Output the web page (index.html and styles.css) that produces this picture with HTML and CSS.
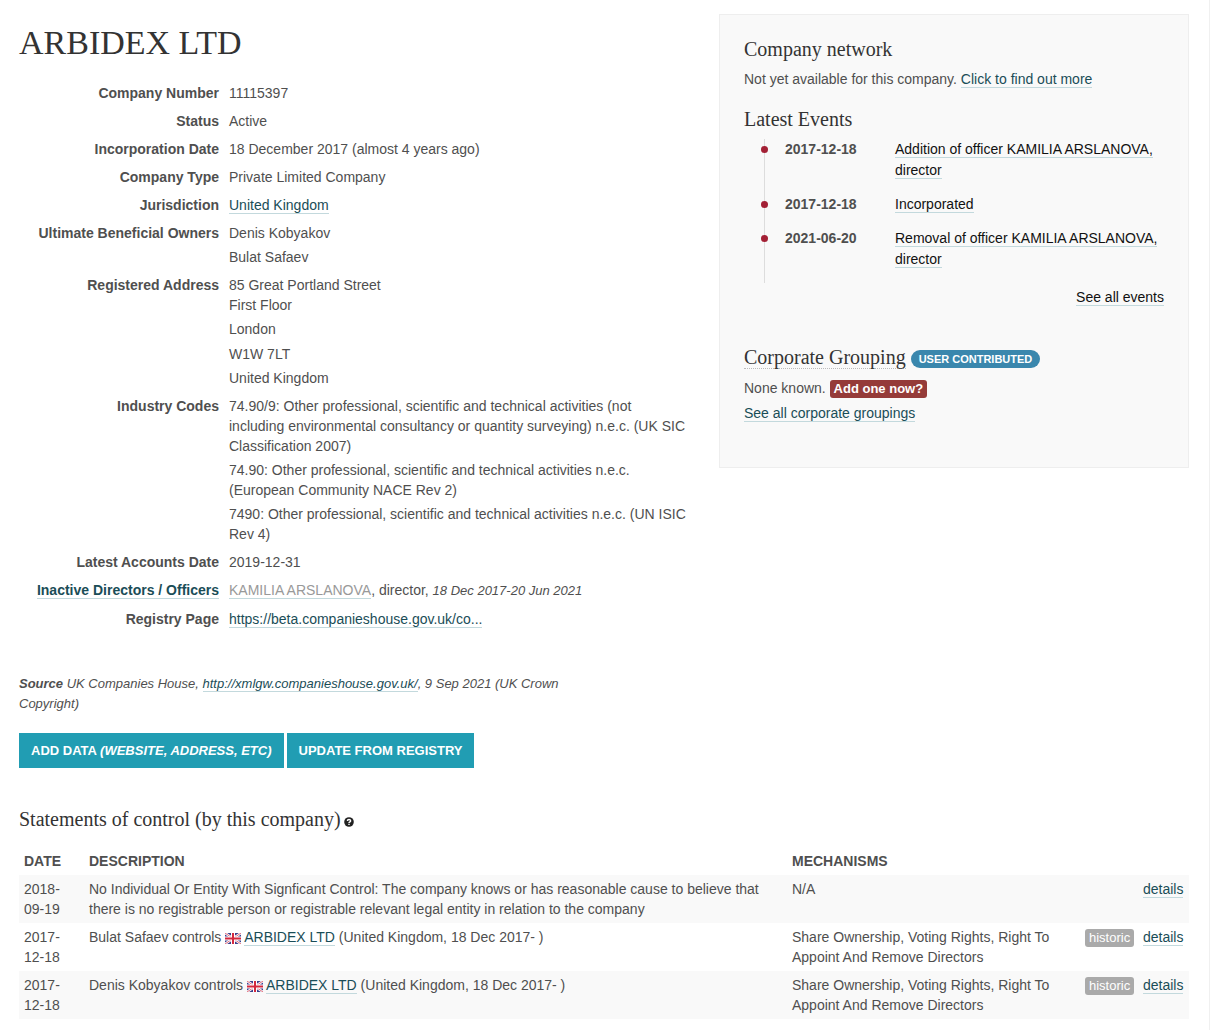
FILE: index.html
```html
<!DOCTYPE html>
<html lang="en">
<head>
<meta charset="utf-8">
<meta name="viewport" content="width=device-width, initial-scale=1">
<title>ARBIDEX LTD</title>
<link rel="stylesheet" href="styles.css">
</head>
<body>
<svg class="sprite" aria-hidden="true">
  <symbol id="flag-gb" viewBox="0 0 16 11">
    <rect width="16" height="11" fill="#3a3f8c"/>
    <path d="M0 0L16 11M16 0L0 11" stroke="#fff" stroke-width="2.4"/>
    <path d="M0 0L16 11M16 0L0 11" stroke="#e0697a" stroke-width="1"/>
    <path d="M8 0V11M0 5.5H16" stroke="#fff" stroke-width="4"/>
    <path d="M8 0V11M0 5.5H16" stroke="#d4283e" stroke-width="2"/>
  </symbol>
</svg>
<main class="page">
  <div class="overview">
    <section class="company">
      <h1 class="company-name">ARBIDEX LTD</h1>
      <dl class="attributes">
        <dt>Company Number</dt><dd>11115397</dd>
        <dt>Status</dt><dd>Active</dd>
        <dt>Incorporation Date</dt><dd>18 December 2017 (almost 4 years ago)</dd>
        <dt>Company Type</dt><dd>Private Limited Company</dd>
        <dt>Jurisdiction</dt><dd><a href="#">United Kingdom</a></dd>
        <dt>Ultimate Beneficial Owners</dt>
        <dd><ul class="values"><li>Denis Kobyakov</li><li>Bulat Safaev</li></ul></dd>
        <dt>Registered Address</dt>
        <dd><ul class="values"><li>85 Great Portland Street<br>First Floor</li><li>London</li><li class="postcode">W1W 7LT</li><li>United Kingdom</li></ul></dd>
        <dt>Industry Codes</dt>
        <dd><ul class="values">
          <li>74.90/9: Other professional, scientific and technical activities (not including environmental consultancy or quantity surveying) n.e.c. (UK SIC Classification 2007)</li>
          <li>74.90: Other professional, scientific and technical activities n.e.c. (European Community NACE Rev 2)</li>
          <li>7490: Other professional, scientific and technical activities n.e.c. (UN ISIC Rev 4)</li>
        </ul></dd>
        <dt>Latest Accounts Date</dt><dd>2019-12-31</dd>
        <dt><a href="#">Inactive Directors / Officers</a></dt>
        <dd class="officers"><a class="inactive" href="#">KAMILIA ARSLANOVA</a>, director, <em class="dates">18 Dec 2017-20 Jun 2021</em></dd>
        <dt>Registry Page</dt><dd><a href="#">https://beta.companieshouse.gov.uk/co...</a></dd>
      </dl>
      <p class="source"><strong>Source</strong> UK Companies House, <a href="#">http://xmlgw.companieshouse.gov.uk/</a>, 9 Sep 2021 (UK Crown Copyright)</p>
      <div class="actions">
        <button class="btn" type="button">ADD DATA <em>(WEBSITE, ADDRESS, ETC)</em></button>
        <button class="btn" type="button">UPDATE FROM REGISTRY</button>
      </div>
    </section>
    <aside class="sidebar">
      <h2 class="heading">Company network</h2>
      <p class="network">Not yet available for this company. <a href="#">Click to find out more</a></p>
      <h2 class="heading">Latest Events</h2>
      <ol class="events">
        <li><time>2017-12-18</time><span><a href="#">Addition of officer KAMILIA ARSLANOVA, director</a></span></li>
        <li><time>2017-12-18</time><span><a href="#">Incorporated</a></span></li>
        <li><time>2021-06-20</time><span><a href="#">Removal of officer KAMILIA ARSLANOVA, director</a></span></li>
      </ol>
      <p class="all-events"><a href="#">See all events</a></p>
      <h2 class="heading grouping"><span class="term">Corporate Grouping</span> <span class="pill">USER CONTRIBUTED</span></h2>
      <p class="none">None known. <a class="tag danger" href="#">Add one now?</a></p>
      <p class="all-groupings"><a href="#">See all corporate groupings</a></p>
    </aside>
  </div>
  <section class="statements">
    <h2 class="heading">Statements of control (by this company)<svg class="help" viewBox="0 0 10 10" role="img" aria-label="Help"><circle cx="5" cy="5" r="4.8" fill="#222"/><path d="M3.4 4C3.4 2.1 6.6 2.1 6.6 3.9C6.6 5 5 4.9 5 6" fill="none" stroke="#fff" stroke-width="1.4"/><path d="M4.3 6.8H5.7V8.1H4.3Z" fill="#fff"/></svg></h2>
    <table class="control">
      <colgroup><col class="col-date"><col><col class="col-mechanisms"><col class="col-state"><col class="col-link"></colgroup>
      <thead><tr><th>DATE</th><th>DESCRIPTION</th><th>MECHANISMS</th><th></th><th></th></tr></thead>
      <tbody>
        <tr><td>2018-09-19</td><td>No Individual Or Entity With Signficant Control: The company knows or has reasonable cause to believe that there is no registrable person or registrable relevant legal entity in relation to the company</td><td>N/A</td><td></td><td><a href="#">details</a></td></tr>
        <tr><td>2017-12-18</td><td>Bulat Safaev controls <svg class="flag" role="img" aria-label="United Kingdom"><use href="#flag-gb"/></svg><a href="#">ARBIDEX LTD</a> (United Kingdom, 18 Dec 2017- )</td><td>Share Ownership, Voting Rights, Right To Appoint And Remove Directors</td><td><span class="tag muted">historic</span></td><td><a href="#">details</a></td></tr>
        <tr><td>2017-12-18</td><td>Denis Kobyakov controls <svg class="flag" role="img" aria-label="United Kingdom"><use href="#flag-gb"/></svg><a href="#">ARBIDEX LTD</a> (United Kingdom, 18 Dec 2017- )</td><td>Share Ownership, Voting Rights, Right To Appoint And Remove Directors</td><td><span class="tag muted">historic</span></td><td><a href="#">details</a></td></tr>
      </tbody>
    </table>
  </section>
</main>
</body>
</html>
```
FILE: styles.css
```css
* { box-sizing: border-box; }

body {
  margin: 0;
  background: #fff;
  color: #4f4f4f;
  font: 14px/20px "Liberation Sans", Arial, sans-serif;
}

h1, h2, p, dl, dd, ul, ol { margin: 0; padding: 0; }
ul, ol { list-style: none; }

a {
  color: #1a4d57;
  text-decoration: none;
  border-bottom: 1px solid #c3d9dd;
}

.sprite { display: none; }

.page {
  min-height: 100vh;
  padding: 14px 20px 11px 19px;
  border-right: 1px solid #f0f0f0;
}

.overview {
  display: grid;
  grid-template-columns: 67fr 47fr;
  gap: 30px;
  align-items: start;
}

.company-name {
  padding-top: 9px;
  color: #333;
  font: 400 34px/40px "Liberation Serif", "Times New Roman", serif;
}

.heading {
  color: #333;
  font: 400 20px/30px "Liberation Serif", "Times New Roman", serif;
}

/* Company attributes */
.attributes {
  display: grid;
  grid-template-columns: 200px 1fr;
  gap: 8px 10px;
  margin-top: 20px;
}
.attributes dt { font-weight: 700; text-align: right; }
.values { display: grid; gap: 4px; }
.postcode { padding-top: 1px; }
.officers { line-height: 21px; }
.officers .inactive { color: #999; }
.officers .dates { font-size: 13px; }

.source {
  max-width: 560px;
  margin-top: 45px;
  font-size: 13px;
  font-style: italic;
}

.actions { display: flex; gap: 3px; margin-top: 19px; }
.btn {
  height: 35px;
  padding: 0 12px;
  border: 0;
  background: #219db3;
  color: #fff;
  font: 700 13px/20px "Liberation Sans", Arial, sans-serif;
}

/* Sidebar */
.sidebar {
  padding: 19px 24px 44px;
  border: 1px solid #eee;
  background: #f9f9f9;
}
.network { margin: 5px 0 15px; }

.events {
  margin-left: 20px;
  border-left: 1px solid #ddd;
  line-height: 21px;
  margin-top: 5px;
}
.events li {
  display: grid;
  grid-template-columns: 110px 1fr;
  position: relative;
  padding: 0 0 13px 20px;
}
.events li::before {
  content: "";
  position: absolute;
  left: -4px;
  top: 7px;
  width: 7px;
  height: 7px;
  border-radius: 50%;
  background: #a32035;
}
.events time { font-weight: 700; }
.events a, .all-events a { color: #111; }
.all-events { margin-top: 4px; text-align: right; }

.grouping { margin-top: 35px; }
.term { border-bottom: 1px dotted #bbb; }
.pill {
  display: inline-block;
  padding: 0 8px;
  border-radius: 9px;
  background: #3a87ad;
  color: #fff;
  font: 700 11px/18px "Liberation Sans", Arial, sans-serif;
  vertical-align: 1px;
}
.none { margin-top: 6px; }
.all-groupings { margin-top: 5px; }

.tag {
  display: inline-block;
  padding: 0 4px;
  border: 0;
  border-radius: 3px;
  color: #fff;
  font-size: 13px;
  line-height: 18px;
}
.danger { background: #953b39; font-weight: 700; }
.muted { background: #aaa; }

/* Statements of control */
.statements { margin-top: 36px; }
.help { width: 10px; height: 10px; margin-left: 3px; vertical-align: -1px; }

.control {
  width: 100%;
  margin-top: 13px;
  border-collapse: collapse;
  table-layout: fixed;
}
.col-date { width: 65px; }
.col-mechanisms { width: 293px; }
.col-state { width: 58px; }
.col-link { width: 51px; }
.control th, .control td { padding: 4px 5px; text-align: left; vertical-align: top; }
.control tbody tr:nth-child(odd) { background: #f9f9f9; }
.flag { width: 16px; height: 11px; margin-right: 3px; vertical-align: -2px; }
```
